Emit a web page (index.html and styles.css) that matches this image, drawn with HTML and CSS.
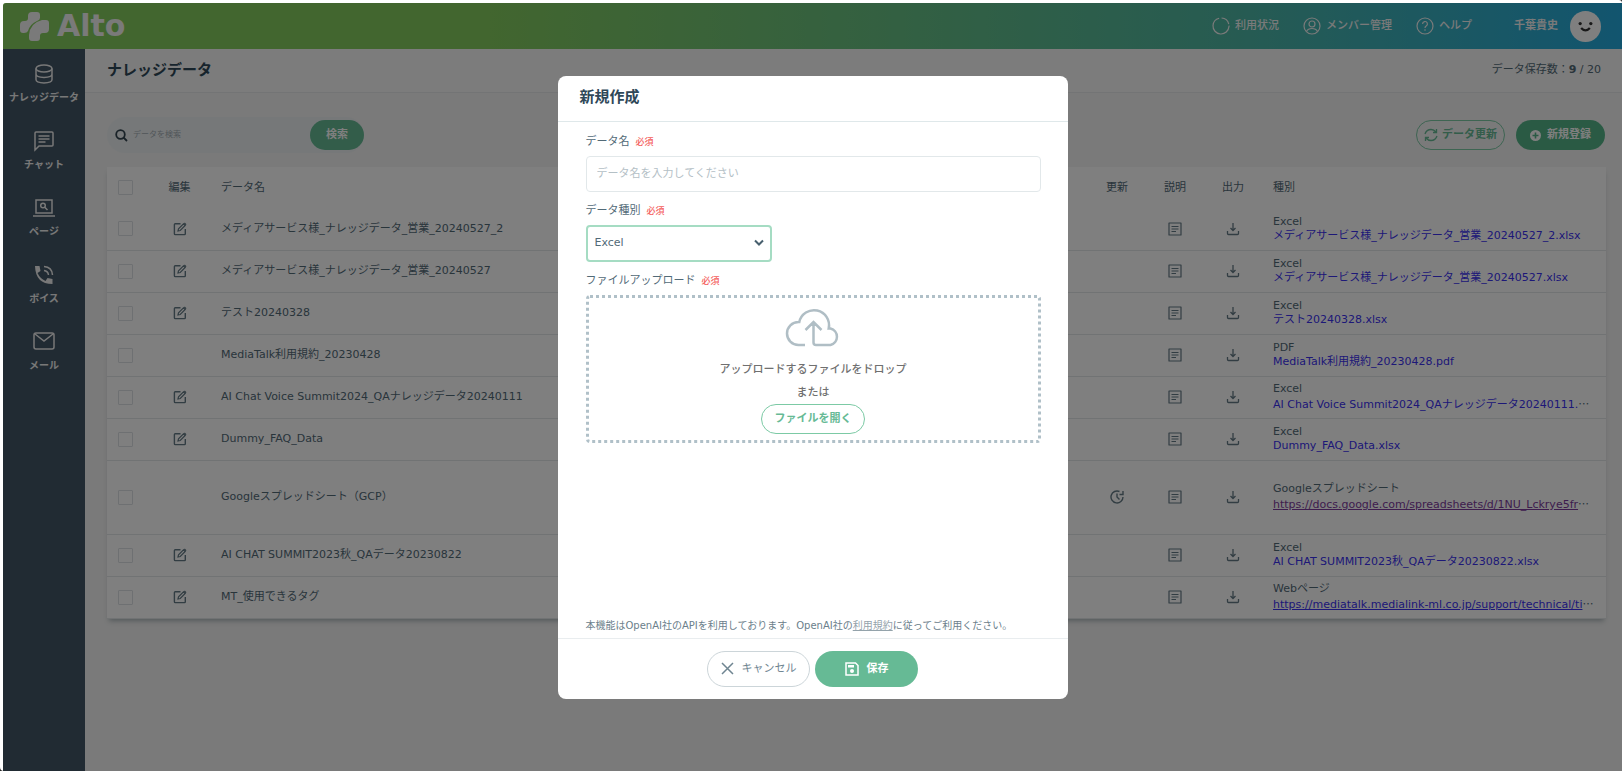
FILE: index.html
```html
<!DOCTYPE html>
<html lang="ja">
<head>
<meta charset="utf-8">
<title>ナレッジデータ</title>
<meta name="viewport" content="width=device-width, initial-scale=1">
<link rel="stylesheet" href="styles.css">
</head>
<body>
<svg class="sprite" aria-hidden="true">
  <symbol id="i-edit" viewBox="0 0 14 14"><path d="M7.500 1.700H2.200q-.8 0-.8.8v9.300q0 .8.800.8h9.300q.8 0 .8-.8V7" fill="none" stroke="currentColor" stroke-width="1.400"/><path d="M5 9l.5-2.200 5-5 1.700 1.700-5 5z" fill="none" stroke="currentColor" stroke-width="1.200"/><path d="M10.800 1.500l1-1 1.700 1.700-1 1z" fill="currentColor"/></symbol>
  <symbol id="i-doc" viewBox="0 0 14 14"><path d="M1 1h12v12H1zM3.500 4.500h7M3.500 7h7M3.500 9.500h4.500" fill="none" stroke="currentColor" stroke-width="1.200" stroke-linejoin="round"/></symbol>
  <symbol id="i-down" viewBox="0 0 14 14"><path d="M7 1v7.500M4.500 6L7 8.500 9.500 6M1.500 9v2.500q0 1 1 1h9q1 0 1-1V9" fill="none" stroke="currentColor" stroke-width="1.300"/></symbol>
  <symbol id="i-clock" viewBox="0 0 14 14"><path d="M9.500 1.500A6 6 0 1 0 13 7M7 3.500V7l2.500 2.500M13 1v3.500H9.500" fill="none" stroke="currentColor" stroke-width="1.400"/></symbol>
</svg>
<div class="window">
<div class="app">
  <header class="topbar">
    <a class="logo" href="#">
      <svg width="31" height="31" viewBox="0 0 31 31" fill="currentColor" aria-hidden="true"><path d="M9 5Q9 1 13 1h5q3 0 3 3v3Q21 9 18 10Q11 13 9 20Q8 22 5 22H4Q1 22 1 19v-5Q1 10 5 10h1q3 0 3-3z"/><path d="M30 12Q30 9 27 9h-4Q11 12 10 24v3q0 3 3 3h5q3 0 3-3v-2q0-3 3-3h2q4 0 4-4z"/></svg>
      <span>Alto</span>
    </a>
    <nav class="topnav">
      <a href="#"><svg width="18" height="18" viewBox="0 0 18 18" fill="none" stroke="currentColor" stroke-width="1.200"><circle cx="9" cy="9" r="8" stroke-dasharray="10 1.500 36 2.760" transform="rotate(-86 9 9)"/></svg>利用状況</a>
      <a href="#"><svg width="18" height="18" viewBox="0 0 18 18" fill="none" stroke="currentColor" stroke-width="1.200"><circle cx="9" cy="9" r="8"/><circle cx="9" cy="7" r="3"/><path d="M3.500 14.500Q5 11.500 9 11.500t5.500 3"/></svg>メンバー管理</a>
      <a href="#"><svg width="18" height="18" viewBox="0 0 18 18" fill="none" stroke="currentColor" stroke-width="1.200"><circle cx="9" cy="9" r="8"/><path d="M6.600 7a2.400 2.400 0 1 1 3.600 2Q9 9.700 9 11M9 12.300v1.500"/></svg>ヘルプ</a>
      <a class="user" href="#">千葉貴史<svg width="31" height="31" viewBox="0 0 32 32" aria-hidden="true"><circle cx="16" cy="16" r="16" fill="#fff"/><circle cx="10.500" cy="13" r="1.700" fill="#333"/><circle cx="21.500" cy="13" r="1.700" fill="#333"/><path d="M11.500 17.500q4.500 5 9 0" fill="none" stroke="#333" stroke-width="2.400"/></svg></a>
    </nav>
  </header>
  <nav class="sidebar">
    <a href="#"><svg width="22" height="22" viewBox="0 0 22 22"><ellipse cx="11" cy="5.500" rx="8" ry="3.500"/><path d="M3 5.500v11c0 4.500 16 4.500 16 0v-11M3 11c0 4.500 16 4.500 16 0"/></svg>ナレッジデータ</a>
    <a href="#"><svg width="22" height="22" viewBox="0 0 22 22"><path d="M2 20V3q0-1 1-1h16q1 0 1 1v12q0 1-1 1H6zM5.500 6h11M5.500 9h11M5.500 12h7"/></svg>チャット</a>
    <a href="#"><svg width="22" height="22" viewBox="0 0 22 22"><path d="M3 3h16v13H3zM0 19h22M11.500 10l3 3"/><circle cx="10" cy="8.500" r="2.300"/></svg>ページ</a>
    <a href="#"><svg width="22" height="22" viewBox="0 0 22 22"><path d="M2 2h4.500l1 5-3 2q2.500 5.500 8 8l2-3 5 1V20Q2.500 20 2 2z" class="solid"/><path d="M11 6.500q4 .5 4.500 4.500M11 2.500q8 .5 8.500 8.500"/></svg>ボイス</a>
    <a href="#"><svg width="22" height="22" viewBox="0 0 22 22"><rect x="1" y="2" width="20" height="16" rx="2"/><path d="M2 3l9 7 9-7"/></svg>メール</a>
  </nav>
  <main class="main">
    <div class="titlebar">
      <h1>ナレッジデータ</h1>
      <p>データ保存数：<b>9</b> / 20</p>
    </div>
    <div class="content">
      <div class="tools">
        <form class="search">
          <svg width="13" height="13" viewBox="0 0 13 13" fill="none" stroke="#334550" stroke-width="1.800"><circle cx="5.500" cy="5.500" r="4.300"/><path d="M8.500 8.500l3.500 3.500"/></svg>
          <input type="text" placeholder="データを検索" aria-label="データを検索">
          <button class="btn green" type="button">検索</button>
        </form>
        <div class="actions">
          <button class="btn outline" type="button"><svg width="14" height="14" viewBox="0 0 14 14" fill="none" stroke="currentColor" stroke-width="1.300"><path d="M1 6q1.500-4.500 6-4.500 3 0 5 2.500M12.500 1v3.500H9M13 8q-1.500 4.500-6 4.500-3 0-5-2.500M1.500 13V9.500H5"/></svg>データ更新</button>
          <button class="btn green" type="button"><svg width="11" height="11" viewBox="0 0 11 11"><circle cx="5.500" cy="5.500" r="5.500" fill="#fff"/><path d="M5.500 2.500v6M2.500 5.500h6" stroke="#55b488" stroke-width="1.600"/></svg>新規登録</button>
        </div>
      </div>
      <table class="list">
        <colgroup><col class="c-check"><col class="c-edit"><col><col class="c-icon"><col class="c-icon"><col class="c-icon"><col class="c-type"></colgroup>
        <thead><tr><th><input type="checkbox" aria-label="すべて選択"></th><th>編集</th><th class="left">データ名</th><th>更新</th><th>説明</th><th>出力</th><th class="left type">種別</th></tr></thead>
        <tbody>
        <tr><td><input type="checkbox" aria-label="選択"></td><td><svg class="ic"><use href="#i-edit"/></svg></td><td class="left">メディアサービス様_ナレッジデータ_営業_20240527_2</td><td></td><td><svg class="ic"><use href="#i-doc"/></svg></td><td><svg class="ic"><use href="#i-down"/></svg></td><td class="left type">Excel<br><a href="#">メディアサービス様_ナレッジデータ_営業_20240527_2.xlsx</a></td></tr>
        <tr><td><input type="checkbox" aria-label="選択"></td><td><svg class="ic"><use href="#i-edit"/></svg></td><td class="left">メディアサービス様_ナレッジデータ_営業_20240527</td><td></td><td><svg class="ic"><use href="#i-doc"/></svg></td><td><svg class="ic"><use href="#i-down"/></svg></td><td class="left type">Excel<br><a href="#">メディアサービス様_ナレッジデータ_営業_20240527.xlsx</a></td></tr>
        <tr><td><input type="checkbox" aria-label="選択"></td><td><svg class="ic"><use href="#i-edit"/></svg></td><td class="left">テスト20240328</td><td></td><td><svg class="ic"><use href="#i-doc"/></svg></td><td><svg class="ic"><use href="#i-down"/></svg></td><td class="left type">Excel<br><a href="#">テスト20240328.xlsx</a></td></tr>
        <tr><td><input type="checkbox" aria-label="選択"></td><td></td><td class="left">MediaTalk利用規約_20230428</td><td></td><td><svg class="ic"><use href="#i-doc"/></svg></td><td><svg class="ic"><use href="#i-down"/></svg></td><td class="left type">PDF<br><a href="#">MediaTalk利用規約_20230428.pdf</a></td></tr>
        <tr><td><input type="checkbox" aria-label="選択"></td><td><svg class="ic"><use href="#i-edit"/></svg></td><td class="left">AI Chat Voice Summit2024_QAナレッジデータ20240111</td><td></td><td><svg class="ic"><use href="#i-doc"/></svg></td><td><svg class="ic"><use href="#i-down"/></svg></td><td class="left type">Excel<br><a href="#">AI Chat Voice Summit2024_QAナレッジデータ20240111.</a><span class="more">…</span></td></tr>
        <tr><td><input type="checkbox" aria-label="選択"></td><td><svg class="ic"><use href="#i-edit"/></svg></td><td class="left">Dummy_FAQ_Data</td><td></td><td><svg class="ic"><use href="#i-doc"/></svg></td><td><svg class="ic"><use href="#i-down"/></svg></td><td class="left type">Excel<br><a href="#">Dummy_FAQ_Data.xlsx</a></td></tr>
        <tr class="tall"><td><input type="checkbox" aria-label="選択"></td><td></td><td class="left">Googleスプレッドシート（GCP）</td><td><svg class="ic"><use href="#i-clock"/></svg></td><td><svg class="ic"><use href="#i-doc"/></svg></td><td><svg class="ic"><use href="#i-down"/></svg></td><td class="left type">Googleスプレッドシート<br><a class="url seen" href="#">https://docs.google.com/spreadsheets/d/1NU_Lckrye5fr</a><span class="more">…</span></td></tr>
        <tr><td><input type="checkbox" aria-label="選択"></td><td><svg class="ic"><use href="#i-edit"/></svg></td><td class="left">AI CHAT SUMMIT2023秋_QAデータ20230822</td><td></td><td><svg class="ic"><use href="#i-doc"/></svg></td><td><svg class="ic"><use href="#i-down"/></svg></td><td class="left type">Excel<br><a href="#">AI CHAT SUMMIT2023秋_QAデータ20230822.xlsx</a></td></tr>
        <tr><td><input type="checkbox" aria-label="選択"></td><td><svg class="ic"><use href="#i-edit"/></svg></td><td class="left">MT_使用できるタグ</td><td></td><td><svg class="ic"><use href="#i-doc"/></svg></td><td><svg class="ic"><use href="#i-down"/></svg></td><td class="left type">Webページ<br><a class="url" href="#">https://mediatalk.medialink-ml.co.jp/support/technical/ti</a><span class="more">…</span></td></tr>
        </tbody>
      </table>
    </div>
  </main>
  <div class="overlay">
    <section class="modal" role="dialog" aria-labelledby="dlg-title">
      <h2 id="dlg-title">新規作成</h2>
      <div class="form">
        <label for="name">データ名<em>必須</em></label>
        <input id="name" type="text" placeholder="データ名を入力してください">
        <label for="kind">データ種別<em>必須</em></label>
        <div class="select">
          <select id="kind"><option>Excel</option></select>
          <svg width="10" height="8" viewBox="0 0 10 8" fill="none" stroke="#48606e" stroke-width="2"><path d="M1 1.500l4 4 4-4"/></svg>
        </div>
        <label for="open">ファイルアップロード<em>必須</em></label>
        <div class="drop">
          <svg width="56" height="40" viewBox="0 0 56 40" fill="none" stroke="#b0bec5" stroke-width="2.500"><path d="M20 38h-6.500a11.500 11.500 0 0 1 0-23q0 0 .8 0a15 15 0 0 1 29.400 6.500h1.800a8.500 8.500 0 0 1 0 16.500H31q-2.500 0-2.500-2.500V15M20.500 23l8-8 8 8"/></svg>
          <p>アップロードするファイルをドロップ</p>
          <p>または</p>
          <button class="btn outline" id="open" type="button">ファイルを開く</button>
        </div>
        <p class="note">本機能はOpenAI社のAPIを利用しております。OpenAI社の<a href="#">利用規約</a>に従ってご利用ください。</p>
      </div>
      <div class="foot">
        <button class="btn cancel" type="button"><svg width="13" height="13" viewBox="0 0 13 13" stroke="currentColor" stroke-width="1.500"><path d="M1 1l11 11M12 1L1 12"/></svg>キャンセル</button>
        <button class="btn green" type="button"><svg width="14" height="14" viewBox="0 0 14 14"><path d="M1 1h9.500L13 3.500V13H1z" fill="none" stroke="#fff" stroke-width="1.500"/><path d="M3 3h6v2.500H3z" fill="#fff"/><circle cx="7" cy="9" r="2" fill="#fff"/></svg>保存</button>
      </div>
    </section>
  </div>
</div>
</div>
</body>
</html>
```
FILE: styles.css
```css
* { box-sizing: border-box; }
html { background: #2b2b2b; }
body {
  margin: 0;
  font: 11px/14px "DejaVu Sans", "Noto Sans CJK JP", sans-serif;
  color: #526a77;
}
h1, h2, p { margin: 0; }
a { color: inherit; text-decoration: none; }
button, input, select { font: inherit; color: inherit; }
.sprite { position: absolute; width: 0; height: 0; }

.window {
  display: flex;
  min-height: 100vh;
  padding: 3px 0 0 3px;
  background: #fff;
  border-radius: 0 3px 0 4px;
}
.app {
  position: relative;
  flex: 1;
  display: grid;
  grid-template: auto 1fr / 82px 1fr;
  overflow: hidden;
  border-radius: 3px 0 0 0;
}

.topbar {
  grid-column: 1 / 3;
  display: flex;
  align-items: center;
  justify-content: space-between;
  height: 46px;
  padding: 0 21px 0 16px;
  color: #f4f4f4;
  background: linear-gradient(90deg, #84cc5e 0%, #84cc5e 30%, #4eb7a4 76%, #24aade 100%);
}
.logo { display: flex; align-items: center; gap: 7px; font-size: 30px; line-height: 32px; font-weight: bold; }
.topnav { display: flex; align-items: center; gap: 24px; }
.topnav a { display: flex; align-items: center; gap: 5px; font-weight: 500; }
.topnav .user { gap: 12px; margin-left: 18px; font-weight: bold; }

.sidebar {
  display: flex;
  flex-direction: column;
  align-items: center;
  gap: 23px;
  padding-top: 14px;
  background: #425666;
  color: #f0f0f0;
}
.sidebar a { display: flex; flex-direction: column; align-items: center; gap: 6px; height: 44px; font-size: 10px; font-weight: bold; white-space: nowrap; }
.sidebar svg { fill: none; stroke: currentColor; stroke-width: 1.5; }
.sidebar .solid { fill: currentColor; stroke: none; }

.main { background: #f4f4f4; min-width: 0; }
.titlebar {
  display: flex;
  align-items: center;
  justify-content: space-between;
  height: 44px;
  padding: 0 21px 2px 22px;
  background: #f8f8f8;
  border-bottom: 1px solid #e6e9ea;
}
.titlebar h1 { font-size: 15px; line-height: 20px; color: #2f4858; }
.content { padding: 24px 16px 24px 22px; }
.tools { display: flex; justify-content: space-between; align-items: center; padding-right: 1px; }

.btn {
  display: flex;
  align-items: center;
  justify-content: center;
  gap: 6px;
  height: 30px;
  padding: 0;
  border: 1px solid transparent;
  border-radius: 18px;
  background: #fff;
  font-weight: bold;
  white-space: nowrap;
}
.btn.green { background: #66ba95; color: #fff; }
.btn.outline { border-color: #7ccaa5; color: #66ba95; }
.search { display: flex; align-items: center; gap: 5px; width: 257px; height: 36px; padding-left: 8px; border-radius: 18px; background: #edf1f3; }
.search input { flex: 1; min-width: 0; border: 0; padding: 0; background: none; font-size: 8px; }
.search input::placeholder { color: #a3adb3; opacity: 1; }
.search .btn { width: 54px; }
.actions { display: flex; gap: 11px; }
.actions .btn { width: 89px; }
.actions .outline { background: none; gap: 4px; }
.actions .green { background: #55b488; }

.list {
  width: 100%;
  margin-top: 14px;
  table-layout: fixed;
  border-collapse: collapse;
  background: #fff;
  box-shadow: 0 4px 5px -2px #aab4b8;
}
.c-check { width: 36px; }
.c-edit { width: 73px; }
.c-icon { width: 58px; }
.c-type { width: 344px; }
.list th, .list td { padding: 0; text-align: center; white-space: nowrap; }
.list th { height: 41px; font-weight: normal; }
.list td { height: 42px; border-bottom: 1px solid #e2e6e8; }
.list .tall td { height: 74px; }
.list .left { text-align: left; padding-left: 5px; }
.list .type { padding-left: 11px; }
.list .type a { color: #3a30f0; }
.list .type .url { text-decoration: underline; }
.list .type .seen { color: #7d3a9c; }
.more { font-family: "Noto Sans CJK JP", sans-serif; line-height: 14px; }
.list input { appearance: none; display: block; width: 15px; height: 15px; margin: 0 auto; border: 1px solid #dce1e4; border-radius: 1px; }
.ic { display: block; width: 14px; height: 14px; margin: 0 auto; color: #657b86; }

.overlay {
  position: absolute;
  inset: 0;
  display: flex;
  align-items: center;
  justify-content: center;
  background: rgba(0, 0, 0, .5);
}
.modal { width: 510px; border-radius: 8px; background: #fff; }
.modal h2 { height: 46px; padding: 11px 22px; font-size: 15px; line-height: 20px; color: #2f4858; border-bottom: 1px solid #dfe8ea; }
.form { display: flex; flex-direction: column; height: 516px; padding: 12px 27px 5px 28px; }
.form label { display: flex; align-items: center; gap: 6px; height: 16px; margin-bottom: 6px; }
.form em { font-size: 9px; font-style: normal; font-weight: 500; color: #f4605c; }
.form > input { height: 36px; margin-bottom: 11px; padding: 0 10px; border: 1px solid #e2e8ea; border-radius: 4px; background: #fff; }
.form > input::placeholder { color: #b4c0c6; opacity: 1; }
.select { display: grid; align-items: center; width: 186px; margin-bottom: 11px; }
.select > * { grid-area: 1 / 1; }
.select select { appearance: none; width: 100%; height: 37px; padding: 0 7px; border: 2px solid #a5dcc3; border-radius: 4px; background: #fff; }
.select svg { justify-self: end; margin-right: 8px; pointer-events: none; }
.drop { display: flex; flex-direction: column; align-items: center; height: 148px; padding-top: 9px; border: 3px dotted #b0c0c8; border-radius: 4px; }
.drop p { margin-top: 9px; color: #707070; font-weight: 500; }
.drop p:first-of-type { margin-top: 16px; }
.drop .btn { flex: none; width: 104px; margin-top: 4px; }
.note { margin-top: auto; font-size: 10px; color: #6b808b; white-space: nowrap; }
.note a { color: #94a3ab; text-decoration: underline; }
.foot { display: flex; justify-content: center; gap: 5px; padding: 12px 0; border-top: 1px solid #e9edef; }
.foot .btn { width: 103px; height: 36px; gap: 8px; }
.foot .cancel { border-color: #ccd5d9; color: #6f8591; font-weight: normal; }
```
